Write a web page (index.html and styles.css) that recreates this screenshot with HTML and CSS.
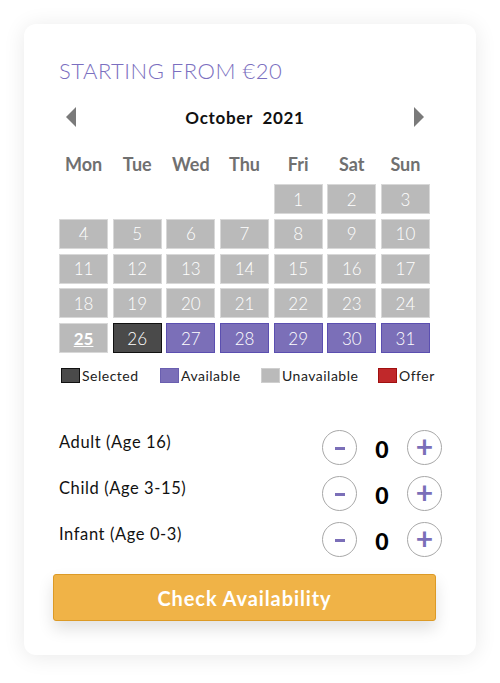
FILE: index.html
```html
<!DOCTYPE html>
<html>
<head>
<meta charset="utf-8">
<link rel="stylesheet" href="styles.css">
</head>
<body>
<div class="card">
  <h2 class="title">STARTING FROM €20</h2>
  <div class="month-bar">
    <svg class="arrow" width="10" height="20" viewBox="0 0 10 20"><polygon points="10,0 10,20 0,10" fill="#7a7a7a"/></svg>
    <div class="month">October&nbsp; 2021</div>
    <svg class="arrow" width="10" height="20" viewBox="0 0 10 20"><polygon points="0,0 0,20 10,10" fill="#7a7a7a"/></svg>
  </div>
  <div class="days">
    <div>Mon</div><div>Tue</div><div>Wed</div><div>Thu</div><div>Fri</div><div>Sat</div><div>Sun</div>
  </div>
  <div class="grid">
    <div class="empty"></div><div class="empty"></div><div class="empty"></div><div class="empty"></div>
    <div class="cell">1</div><div class="cell">2</div><div class="cell">3</div>
    <div class="cell">4</div><div class="cell">5</div><div class="cell">6</div><div class="cell">7</div><div class="cell">8</div><div class="cell">9</div><div class="cell">10</div>
    <div class="cell">11</div><div class="cell">12</div><div class="cell">13</div><div class="cell">14</div><div class="cell">15</div><div class="cell">16</div><div class="cell">17</div>
    <div class="cell">18</div><div class="cell">19</div><div class="cell">20</div><div class="cell">21</div><div class="cell">22</div><div class="cell">23</div><div class="cell">24</div>
    <div class="cell today">25</div><div class="cell selected">26</div><div class="cell avail">27</div><div class="cell avail">28</div><div class="cell avail">29</div><div class="cell avail">30</div><div class="cell avail">31</div>
  </div>
  <div class="legend">
    <div class="key"><span class="sw sw-sel"></span>Selected</div>
    <div class="key"><span class="sw sw-av"></span>Available</div>
    <div class="key"><span class="sw sw-un"></span>Unavailable</div>
    <div class="key"><span class="sw sw-of"></span>Offer</div>
  </div>
  <div class="people">
    <div class="prow">
      <div class="plabel">Adult (Age 16)</div>
      <div class="counter"><span class="btn minus"><span class="bar"></span></span><span class="num">0</span><span class="btn plus">+</span></div>
    </div>
    <div class="prow">
      <div class="plabel">Child (Age 3-15)</div>
      <div class="counter"><span class="btn minus"><span class="bar"></span></span><span class="num">0</span><span class="btn plus">+</span></div>
    </div>
    <div class="prow">
      <div class="plabel">Infant (Age 0-3)</div>
      <div class="counter"><span class="btn minus"><span class="bar"></span></span><span class="num">0</span><span class="btn plus">+</span></div>
    </div>
  </div>
  <div class="check">Check Availability</div>
</div>
</body>
</html>
```
FILE: styles.css
```css
html, body {
  margin: 0;
  padding: 0;
  background: #ffffff;
  font-family: "Lato", "Open Sans", sans-serif;
}
.card {
  box-sizing: border-box;
  margin: 24px;
  width: 452px;
  height: 631px;
  border-radius: 12px;
  background: #fff;
  box-shadow: 0 2px 22px rgba(0, 0, 0, 0.09);
  padding: 34px 35px 0 35px;
}
.title {
  margin: 0;
  font-weight: 300;
  font-size: 22px;
  line-height: 26px;
  color: #7b6fc0;
  letter-spacing: 0.5px;
}
.month-bar {
  margin-top: 23px;
  display: flex;
  align-items: center;
  justify-content: space-between;
  padding: 0 17px 0 7px;
  height: 20px;
}
.month {
  font-weight: 700;
  font-size: 17px;
  color: #111;
  letter-spacing: 0.7px;
}
.days {
  margin-top: 26px;
  display: grid;
  grid-template-columns: repeat(7, 1fr);
  column-gap: 4.5px;
  width: 371px;
  font-weight: 700;
  font-size: 18px;
  color: #707070;
  text-align: center;
  line-height: 22px;
}
.grid {
  margin-top: 9px;
  display: grid;
  grid-template-columns: repeat(7, 1fr);
  grid-auto-rows: 30px;
  gap: 4.8px 4.5px;
  width: 371px;
}
.cell {
  box-sizing: border-box;
  background: #bababa;
  border: 1px solid #d8d8d8;
  color: #fff;
  font-weight: 300;
  font-size: 17px;
  display: flex;
  align-items: center;
  justify-content: center;
}
.cell.today {
  font-weight: 700;
  text-decoration: underline;
}
.cell.selected {
  background: #4a4a4a;
  border-color: #111;
}
.cell.avail {
  background: #7b6fb8;
  border-color: #5b4fb0;
}
.legend {
  margin-top: 15px;
  padding-left: 2px;
  display: grid;
  grid-template-columns: 99px 101px 117px auto;
  font-size: 14px;
  color: #222;
  line-height: 15px;
  letter-spacing: 0.5px;
}
.key {
  display: flex;
  align-items: flex-end;
}
.sw {
  box-sizing: border-box;
  display: inline-block;
  width: 19px;
  height: 15px;
  margin-right: 2px;
  border: 1px solid transparent;
}
.sw-sel { background: #4a4a4a; border-color: #111; }
.sw-av { background: #7b6fb8; border-color: #6a5fb0; }
.sw-un { background: #bababa; border-color: #cfcfcf; }
.sw-of { background: #c0282a; border-color: #a01010; }
.people {
  margin-top: 47px;
  display: flex;
  flex-direction: column;
  gap: 12px;
}
.prow {
  display: flex;
  justify-content: space-between;
  align-items: flex-start;
  height: 34px;
}
.plabel {
  font-size: 16.5px;
  color: #111;
  line-height: 20px;
  margin-top: 2px;
  letter-spacing: 0.6px;
}
.counter {
  display: flex;
  align-items: center;
  margin-right: -1px;
}
.btn {
  box-sizing: border-box;
  width: 35px;
  height: 35px;
  border-radius: 50%;
  border: 1px solid #a8a8a8;
  display: flex;
  align-items: center;
  justify-content: center;
  color: #7b6fb8;
  font-size: 30px;
  font-weight: 700;
  line-height: 1;
  padding-bottom: 3px;
}
.btn.minus {
  padding: 0;
}
.bar {
  display: block;
  width: 10px;
  height: 3px;
  background: #7b6fb8;
  margin-top: 2px;
}
.num {
  width: 50px;
  text-align: center;
  font-weight: 900;
  font-size: 23px;
  color: #000;
  padding-top: 3px;
}
.check {
  box-sizing: border-box;
  margin: 18px 5px 0 -6px;
  height: 47px;
  background: #f0b347;
  border: 1px solid #dc9a26;
  border-radius: 3px;
  color: #fff;
  font-weight: 700;
  font-size: 20px;
  letter-spacing: 0.9px;
  display: flex;
  align-items: center;
  justify-content: center;
  box-shadow: 0 8px 16px rgba(0, 0, 0, 0.12);
}
```
